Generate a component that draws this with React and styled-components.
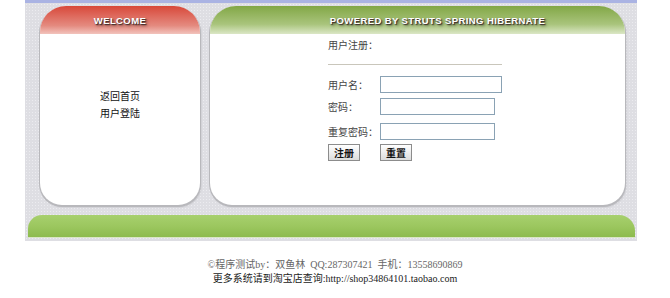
import React from "react";
import styled, { createGlobalStyle } from "styled-components";

const Global = createGlobalStyle`
  body {
    margin: 0;
    background: #ffffff;
    font-family: "Liberation Sans", "Noto Sans CJK SC", sans-serif;
  }
`;

const Page = styled.div`
  width: 670px;
  height: 298px;
  overflow: hidden;
`;

const Frame = styled.div`
  margin-left: 25px;
  width: 612px;
  border-top: 3px solid #aab3e3;
  background-color: #dedee3;
  background-image: radial-gradient(#ececf0 0.8px, transparent 0.9px);
  background-size: 3px 3px;
  padding: 3px 0 3px 0;
  box-sizing: border-box;
  height: 241px;
  display: flex;
  flex-direction: column;
`;

const Columns = styled.div`
  display: flex;
  gap: 10px;
  padding: 0 12px 0 15px;
  height: 199px;
`;

const Panel = styled.div`
  width: ${(p) => p.$w}px;
  background: #ffffff;
  border-radius: 26px 26px 22px 22px;
  box-shadow: 0 1px 0 1px #b8b8bc, 1px 2px 2px rgba(0, 0, 0, 0.18);
  overflow: hidden;
  display: flex;
  flex-direction: column;
`;

const Header = styled.div`
  height: 28px;
  flex: none;
  display: flex;
  align-items: center;
  justify-content: center;
  padding-left: ${(p) => p.$shift || 0}px;
  background: ${(p) =>
    p.$tone === "red"
      ? "linear-gradient(#d8483a, #e48a7f 70%, #f2c3bc)"
      : "linear-gradient(#82a746, #a9c47c 65%, #dbe7c6)"};
  color: #ffffff;
  font-weight: bold;
  font-size: ${(p) => p.$size}px;
  letter-spacing: 0.4px;
  text-shadow: 1px 1px 1px #3a2a2a, 2px 2px 3px rgba(0, 0, 0, 0.5);
`;

const Links = styled.div`
  flex: 1;
  display: flex;
  flex-direction: column;
  align-items: center;
  padding-top: 56px;
  gap: 4px;
  font-size: 10px;
  color: #111;
  line-height: 13px;
`;

const Form = styled.div`
  padding: 6px 0 0 118px;
  font-size: 10px;
  color: #444;
`;

const Title = styled.div`
  height: 12px;
  line-height: 12px;
`;

const Rule = styled.div`
  width: 174px;
  height: 1px;
  background: #c9c6bb;
  margin: 12px 0 11px;
`;

const Row = styled.div`
  display: flex;
  align-items: center;
  height: 17px;
  margin-bottom: ${(p) => p.$mb}px;
`;

const Label = styled.span`
  width: 52px;
  flex: none;
  white-space: nowrap;
`;

const Input = styled.div`
  width: ${(p) => p.$w}px;
  height: 17px;
  box-sizing: border-box;
  border: 1px solid #8aa2b4;
  background: #fff;
`;

const Buttons = styled.div`
  display: flex;
  gap: 20px;
`;

const Button = styled.div`
  width: 32px;
  height: 17px;
  box-sizing: border-box;
  border: 1px solid #8c8c8c;
  background: linear-gradient(#ffffff, #dcdcdc);
  display: flex;
  align-items: center;
  justify-content: center;
  font-size: 10px;
  font-weight: bold;
  color: #111;
`;

const Bar = styled.div`
  margin: 10px 2px 0 3px;
  height: 22px;
  border-radius: 14px 16px 0 0;
  background: linear-gradient(#a7d06e, #9cc75f 50%, #8dbb4e);
  box-shadow: 0 1px 0 #d9e5c4;
`;

const Footer = styled.div`
  margin-top: 17px;
  text-align: center;
  font-family: "Liberation Serif", "Noto Sans CJK SC", serif;
  font-size: 10px;
  line-height: 14px;
`;

const Line = styled.div`
  color: ${(p) => p.$c};
`;

export default function App() {
  return (
    <Page>
      <Global />
      <Frame>
        <Columns>
          <Panel $w={160}>
            <Header $tone="red" $size={9.5}>WELCOME</Header>
            <Links>
              <span>返回首页</span>
              <span>用户登陆</span>
            </Links>
          </Panel>
          <Panel $w={415}>
            <Header $tone="green" $size={9.5} $shift={40}>
              POWERED BY STRUTS SPRING HIBERNATE
            </Header>
            <Form>
              <Title>用户注册：</Title>
              <Rule />
              <Row $mb={5}>
                <Label>用户名：</Label>
                <Input $w={122} />
              </Row>
              <Row $mb={8}>
                <Label>密码：</Label>
                <Input $w={115} />
              </Row>
              <Row $mb={4}>
                <Label>重复密码：</Label>
                <Input $w={115} />
              </Row>
              <Buttons>
                <Button>注册</Button>
                <Button>重置</Button>
              </Buttons>
            </Form>
          </Panel>
        </Columns>
        <Bar />
      </Frame>
      <Footer>
        <Line $c="#666">©程序测试by：双鱼林&nbsp;&nbsp;QQ:287307421&nbsp;&nbsp;手机：13558690869</Line>
        <Line $c="#222">更多系统请到淘宝店查询:http://shop34864101.taobao.com</Line>
      </Footer>
    </Page>
  );
}
